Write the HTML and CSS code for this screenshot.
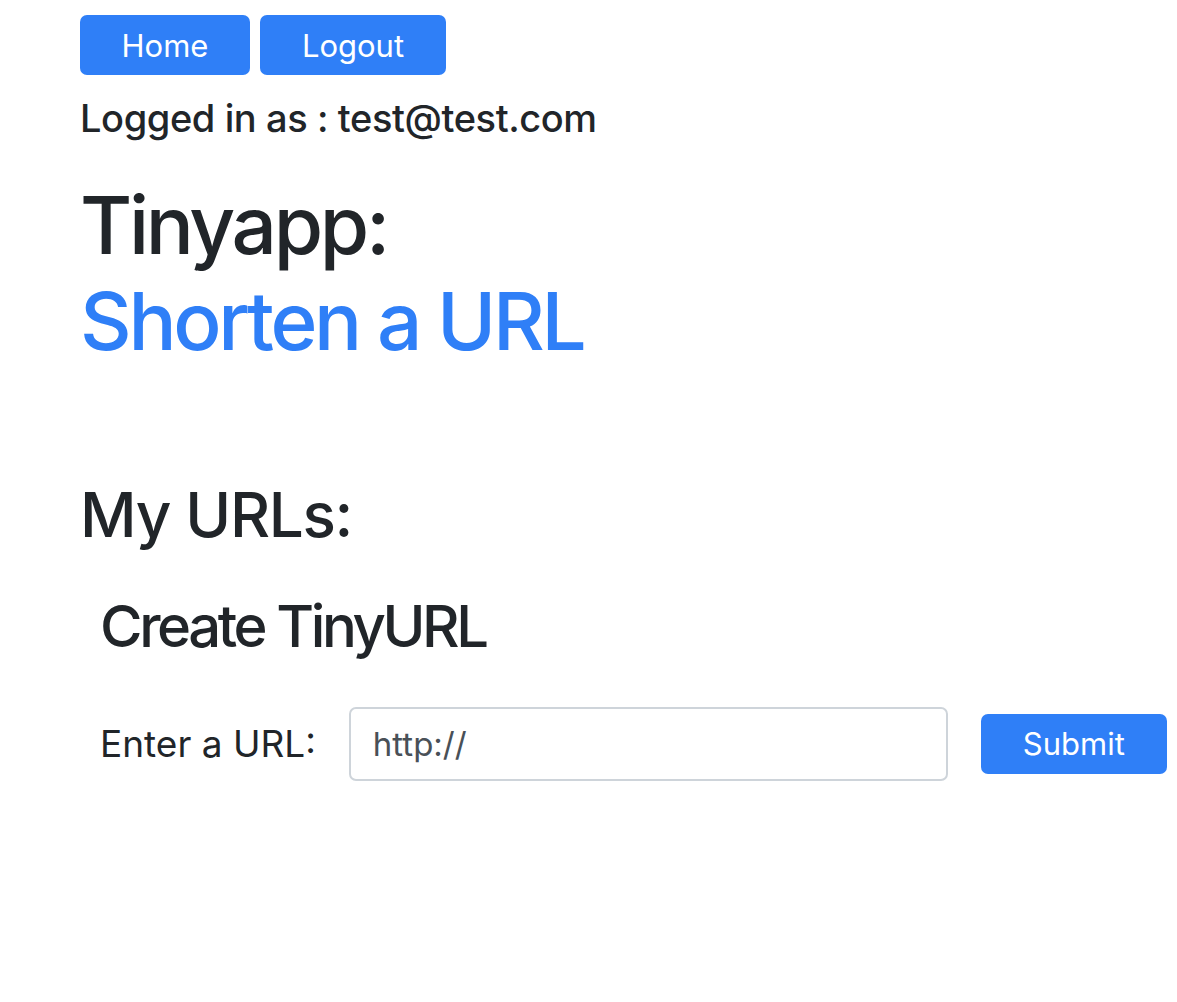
FILE: index.html
```html
<!DOCTYPE html>
<html lang="en">
<head>
<meta charset="utf-8">
<title>TinyApp</title>
<link rel="stylesheet" href="styles.css">
</head>
<body>
<div class="container">
  <nav class="nav">
    <a class="btn btn-home" href="#">Home</a>
    <a class="btn btn-logout" href="#">Logout</a>
  </nav>
  <h5 class="user">Logged in as : test@test.com</h5>
  <h1 class="title">Tinyapp:<br><span class="accent">Shorten a URL</span></h1>
  <h2 class="my-urls">My URLs:</h2>
  <section class="create">
    <h2 class="create-title">Create TinyURL</h2>
    <form class="form-row">
      <label class="label" for="url">Enter a URL:</label>
      <input class="input" id="url" type="text" value="http://">
      <button class="btn btn-submit" type="button">Submit</button>
    </form>
  </section>
</div>
</body>
</html>
```
FILE: styles.css
```css
html, body {
  margin: 0;
  padding: 0;
  background: #ffffff;
}
body {
  font-family: Inter, "Noto Sans", sans-serif;
  color: #212529;
}
.container {
  padding-left: 80px;
}
.nav {
  display: flex;
  gap: 10px;
  padding-top: 15px;
}
.btn {
  display: flex;
  align-items: center;
  justify-content: center;
  height: 60px;
  box-sizing: border-box;
  background: #2f7ff7;
  color: #ffffff;
  border: none;
  border-radius: 7px;
  font-family: Inter, "Noto Sans", sans-serif;
  font-size: 31px;
  font-weight: 400;
  text-decoration: none;
}
.btn-home { width: 170px; }
.btn-logout { width: 186px; }
.user {
  margin: 21px 0 0;
  font-size: 38px;
  line-height: 1.2;
  font-weight: 500;
  letter-spacing: -0.4px;
}
.title {
  margin: 35px 0 0;
  font-size: 80px;
  line-height: 1.2;
  font-weight: 500;
  letter-spacing: -3.3px;
}
.accent { color: #2f7ff7; }
.my-urls {
  margin: 109px 0 0;
  font-size: 62px;
  line-height: 1.2;
  font-weight: 500;
  letter-spacing: -1.3px;
}
.create {
  padding-left: 20px;
}
.create-title {
  margin: 40px 0 0;
  font-size: 58px;
  line-height: 1.2;
  font-weight: 500;
  letter-spacing: -3.4px;
}
.form-row {
  display: flex;
  align-items: center;
  margin-top: 45px;
}
.label {
  font-size: 37px;
  margin-right: 33px;
}
.input {
  width: 599px;
  height: 74px;
  box-sizing: border-box;
  border: 2px solid #ced4da;
  border-radius: 7px;
  padding: 0 22px;
  font-family: Inter, "Noto Sans", sans-serif;
  font-size: 33px;
  color: #495057;
  outline: none;
}
.btn-submit {
  width: 186px;
  margin-left: 33px;
}
```
